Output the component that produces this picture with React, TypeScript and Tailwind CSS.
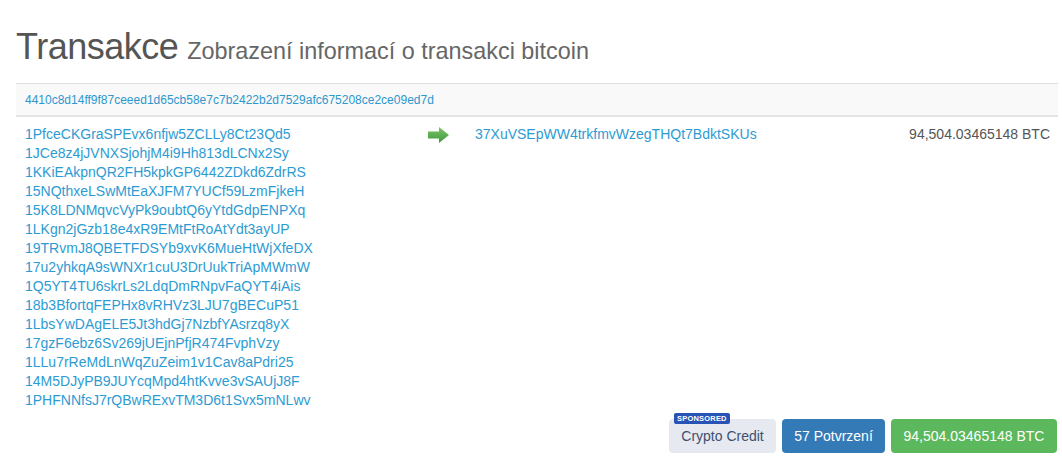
import React from "react";

const inputs = [
  "1PfceCKGraSPEvx6nfjw5ZCLLy8Ct23Qd5",
  "1JCe8z4jJVNXSjohjM4i9Hh813dLCNx2Sy",
  "1KKiEAkpnQR2FH5kpkGP6442ZDkd6ZdrRS",
  "15NQthxeLSwMtEaXJFM7YUCf59LzmFjkeH",
  "15K8LDNMqvcVyPk9oubtQ6yYtdGdpENPXq",
  "1LKgn2jGzb18e4xR9EMtFtRoAtYdt3ayUP",
  "19TRvmJ8QBETFDSYb9xvK6MueHtWjXfeDX",
  "17u2yhkqA9sWNXr1cuU3DrUukTriApMWmW",
  "1Q5YT4TU6skrLs2LdqDmRNpvFaQYT4iAis",
  "18b3BfortqFEPHx8vRHVz3LJU7gBECuP51",
  "1LbsYwDAgELE5Jt3hdGj7NzbfYAsrzq8yX",
  "17gzF6ebz6Sv269jUEjnPfjR474FvphVzy",
  "1LLu7rReMdLnWqZuZeim1v1Cav8aPdri25",
  "14M5DJyPB9JUYcqMpd4htKvve3vSAUjJ8F",
  "1PHFNNfsJ7rQBwRExvTM3D6t1Svx5mNLwv",
];

function Arrow() {
  return (
    <svg width="21" height="16" viewBox="0 0 21 16" className="block">
      <defs>
        <linearGradient id="g" x1="0" y1="0" x2="0" y2="1">
          <stop offset="0" stopColor="#7cc36a" />
          <stop offset="1" stopColor="#3f9a3a" />
        </linearGradient>
      </defs>
      <path d="M0 4.5 H11 V0 L21 8 L11 16 V11.5 H0 Z" fill="url(#g)" />
    </svg>
  );
}

export default function App() {
  return (
    <div
      className="w-[1062px] h-[459px] bg-white pl-4 pr-[4px] overflow-hidden"
      style={{ fontFamily: '"Liberation Sans", Arial, sans-serif' }}
    >
      <h1 className="pt-[27px] h-[67px] flex items-baseline text-[#555]">
        <span className="text-[36px] leading-[40px] tracking-[-0.5px]">Transakce</span>
        <span className="ml-[9px] text-[23.4px] leading-[26px] text-[#666]">Zobrazení informací o transakci bitcoin</span>
      </h1>
      <div className="mt-[16px] border-t border-[#dddddd]">
        <div className="bg-[#f9f9f9] border-b-2 border-[#e4e4e4] h-[33px] flex items-center pl-[9px]">
          <a className="text-[12px] text-[#2d97cf]">4410c8d14ff9f87ceeed1d65cb58e7c7b2422b2d7529afc675208ce2ce09ed7d</a>
        </div>
        <div className="flex pt-[8px]">
          <div className="w-[412px] pl-[9px] text-[14px] leading-[19px] text-[#2d9bd3]">
            {inputs.map((a) => (
              <div key={a}>{a}</div>
            ))}
          </div>
          <div className="pt-[2px]">
            <Arrow />
          </div>
          <div className="flex-1 flex justify-between pl-[26px] pr-[8px] text-[14px] leading-[19px]">
            <span className="text-[#2d9bd3]">37XuVSEpWW4trkfmvWzegTHQt7BdktSKUs</span>
            <span className="text-[#555]">94,504.03465148 BTC</span>
          </div>
        </div>
      </div>
      <div className="flex justify-end gap-[6px] mt-[9px] pr-[1px] text-[14px]">
        <div className="relative h-[34px] w-[107px] rounded-[4px] bg-[#e6e9ef] text-[#3d4f70] flex items-center justify-center">
          Crypto Credit
          <span className="absolute left-[5px] top-[-6px] bg-[#2653b5] text-white text-[7.5px] font-bold leading-[11px] px-[3px] rounded-[2px] tracking-[0.2px]">
            SPONSORED
          </span>
        </div>
        <div className="h-[34px] w-[103px] rounded-[4px] bg-[#337ab7] text-white flex items-center justify-center">
          57 Potvrzení
        </div>
        <div className="h-[34px] w-[166px] rounded-[4px] bg-[#5cb85c] text-white flex items-center justify-center">
          94,504.03465148 BTC
        </div>
      </div>
    </div>
  );
}
